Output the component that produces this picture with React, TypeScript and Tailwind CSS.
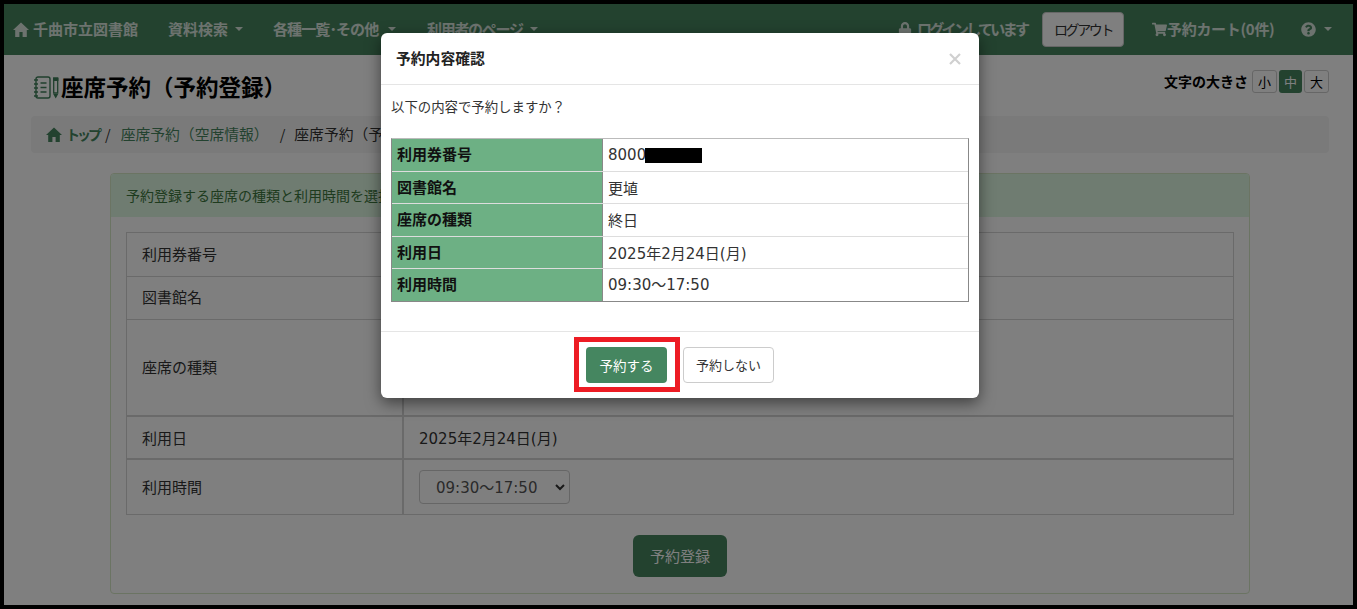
import { FaLock, FaShoppingCart, FaQuestionCircle } from "react-icons/fa";

const font = { fontFamily: '"Noto Sans CJK JP", "Open Sans", sans-serif' };
const valueFont = { fontFamily: '"DejaVu Sans", "Noto Sans CJK JP", sans-serif' };

function Caret({ className = "" }: { className?: string }) {
  return <span className={`inline-block w-0 h-0 border-x-4 border-x-transparent border-t-4 border-t-white/80 ${className}`} />;
}

function HomeIcon({ className = "" }: { className?: string }) {
  return (
    <svg className={className} width="16" height="15" viewBox="0 0 16 15" fill="currentColor">
      <path d="M8 0.5 L0 8 H2.2 V15 H6.4 V10 H9.6 V15 H13.8 V8 H16 Z" />
    </svg>
  );
}

function NotebookIcon() {
  return (
    <svg width="28" height="23" viewBox="0 0 28 23" fill="none" stroke="#3f7f5a" strokeWidth="1.4">
      <rect x="3" y="1" width="14" height="21" rx="2" />
      <path d="M1 4h4M1 8h4M1 12h4M1 16h4M1 20h4" strokeWidth="1.3" />
      <path d="M7.5 7h6M7.5 11.5h6M7.5 16h6" />
      <path d="M20.7 2h4v15h-4z" strokeWidth="1.3" />
      <path d="M20 2h5.4v3H20zM20.2 18h5l-2.5 4.5z" fill="#3f7f5a" stroke="none" />
    </svg>
  );
}

const bgRows = [
  { label: "利用券番号", h: "h-[44px]", lp: "pb-[1px]", vp: "", value: null as React.ReactNode, thick: false },
  { label: "図書館名", h: "h-[43px]", lp: "pb-[1px]", vp: "", value: null, thick: false },
  { label: "座席の種類", h: "h-[97px]", lp: "pb-[1px]", vp: "", value: null, thick: true },
  { label: "利用日", h: "h-[43px]", lp: "pt-[1px]", vp: "pt-[3px]", value: "2025年2月24日(月)", thick: true },
];

const modalRows = [
  { label: "利用券番号", h: "h-[33px]", vp: "", value: (
    <span className="flex items-center">8000<span className="inline-block w-[57px] h-[15px] bg-black -ml-[1px]" /></span>
  ) },
  { label: "図書館名", h: "h-[32px]", vp: "pt-[3px]", value: "更埴" },
  { label: "座席の種類", h: "h-[33px]", vp: "pt-[2px]", value: "終日" },
  { label: "利用日", h: "h-[32px]", vp: "pt-[3px]", value: "2025年2月24日(月)" },
  { label: "利用時間", h: "h-[32px]", vp: "", value: "09:30～17:50" },
];

export default function App() {
  return (
    <div style={font} className="relative w-[1357px] h-[609px] overflow-hidden border-4 border-black bg-white text-[14px] text-[#333]">
      {/* navbar */}
      <nav className="h-[51px] bg-[#46855f] flex items-center text-white/80 font-bold text-[15px] whitespace-nowrap pb-[1px]">
        <HomeIcon className="ml-[9px] shrink-0" />
        <span className="ml-[4px] w-[105px]">千曲市立図書館</span>
        <span className="ml-[30px] w-[60px]">資料検索</span>
        <Caret className="ml-[7px]" />
        <span className="ml-[30px] w-[108px] tracking-[-0.9px]">各種一覧･その他</span>
        <Caret className="ml-[7px]" />
        <span className="ml-[31px] w-[96px] tracking-[-1.3px]">利用者のページ</span>
        <Caret className="ml-[7px]" />
        <FaLock className="ml-auto text-[14px] shrink-0" />
        <span className="ml-[5px] w-[110px] tracking-[-2.7px]">ログインしています</span>
        <span className="ml-[15px] w-[82px] h-[35px] flex items-center justify-center rounded-[4px] border border-[#ccc] bg-white text-[#333] font-normal text-[14px] tracking-[-2.4px]">ログアウト</span>
        <FaShoppingCart className="ml-[28px] text-[15px] shrink-0" />
        <span className="w-[106px] tracking-[-0.3px]">予約カート(0件)</span>
        <FaQuestionCircle className="ml-[28px] text-[15px] shrink-0" />
        <Caret className="ml-[8px] mr-[21px]" />
      </nav>

      {/* title row */}
      <div className="h-[61px] flex items-start justify-between pl-[29px] pr-[24px]">
        <div className="flex items-center mt-[14px] h-[36px]">
          <NotebookIcon />
          <h1 className="text-[22.5px] font-bold text-black">座席予約（予約登録）</h1>
        </div>
        <div className="flex items-center mt-[15px] h-[23px]">
          <span className="font-bold text-black text-[14px] mr-[4px]">文字の大きさ</span>
          <span className="w-[25px] h-[23px] flex items-center justify-center rounded-[3px] border border-[#ccc] text-black text-[13px]">小</span>
          <span className="w-[23px] h-[23px] ml-[2px] flex items-center justify-center rounded-[3px] bg-[#46855f] text-white text-[13px]">中</span>
          <span className="w-[25px] h-[23px] ml-[2px] flex items-center justify-center rounded-[3px] border border-[#ccc] text-black text-[13px]">大</span>
        </div>
      </div>

      {/* breadcrumb */}
      <div className="ml-[27px] mr-[24px] h-[37px] rounded-[4px] bg-[#f5f5f5] flex items-center pl-[15px] whitespace-nowrap text-[14.4px] pb-[1px]">
        <HomeIcon className="text-[#46855f] shrink-0" />
        <span className="ml-[4px] text-[#46855f] font-bold text-[14px] tracking-[-3px]">トップ</span>
        <span className="ml-[6px]">/</span>
        <span className="ml-[10px] text-[#46855f] text-[14.8px]">座席予約（空席情報）</span>
        <span className="ml-[11px]">/</span>
        <span className="ml-[9px] text-[14.8px]">座席予約（予約登録）</span>
      </div>

      {/* panel */}
      <div className="ml-[106px] mr-[103px] mt-[20px] h-[421px] rounded-[4px] border border-[#d6e9c6] text-[15px]">
        <div className="h-[43px] bg-[#dff8e3] text-[#3c763d] flex items-center pl-[15px] rounded-t-[3px] text-[14px]">
          予約登録する座席の種類と利用時間を選択してください。
        </div>
        <div className="mx-[15px] mt-[15px] border border-b-0 border-[#d4d4d4]">
          {bgRows.map((r) => (
            <div key={r.label} className={`flex ${r.thick ? "border-b-2" : "border-b"} border-[#d4d4d4] ${r.h}`}>
              <div className={`w-[277px] border-r-2 border-[#d4d4d4] flex items-center pl-[15px] ${r.lp}`}>{r.label}</div>
              <div style={valueFont} className={`flex-1 flex items-center pl-[15px] text-[15px] ${r.vp}`}>{r.value}</div>
            </div>
          ))}
          <div className="flex border-b border-[#d4d4d4] h-[55px]">
            <div className="w-[277px] border-r-2 border-[#d4d4d4] flex items-center pl-[15px] pt-[1px]">利用時間</div>
            <div className="flex-1 flex items-center pl-[15px]">
              <div style={valueFont} className="w-[151px] h-[34px] rounded-[4px] border border-[#ccc] bg-white text-[#555] text-[15px] flex items-center pl-[16px] pt-[2px] relative">
                09:30～17:50
                <svg className="absolute right-[4px] top-[12px]" width="10" height="8" viewBox="0 0 10 8" fill="none" stroke="#333" strokeWidth="2">
                  <path d="M1 2l4 4 4-4" />
                </svg>
              </div>
            </div>
          </div>
        </div>
        <div className="flex justify-center mt-[20px]">
          <span className="w-[94px] h-[42px] rounded-[6px] bg-[#46855f] text-white flex items-center justify-center text-[15px]">予約登録</span>
        </div>
      </div>

      {/* backdrop */}
      <div className="absolute inset-0 bg-black/50" />

      {/* modal */}
      <div className="absolute left-[377px] top-[29px] w-[598px] h-[365px] bg-white rounded-[6px] shadow-[0_5px_15px_rgba(0,0,0,0.5)] flex flex-col">
        <div className="h-[52px] shrink-0 border-b border-[#e5e5e5] flex items-center justify-between pl-[15px] pr-[18px]">
          <span className="font-bold text-[#222] text-[14.8px] pb-[1px]">予約内容確認</span>
          <svg width="12" height="12" viewBox="0 0 12 12" stroke="#d0d0d0" strokeWidth="2.2">
            <path d="M1 1l10 10M11 1L1 11" />
          </svg>
        </div>
        <div className="h-[247px] shrink-0 border-b border-[#e5e5e5] px-[10px]">
          <p className="mt-[11px] h-[21px] leading-[21px] text-[13.4px]">以下の内容で予約しますか？</p>
          <div className="mt-[21px] w-[578px] border border-[#888] border-t-[#bbb] text-[15px]">
            {modalRows.map((r, i) => (
              <div key={r.label} className={`flex ${r.h} ${i < 4 ? "border-b border-[#ddd]" : ""}`}>
                <div className="w-[211px] bg-[#6db084] border-r border-[#888] flex items-center pl-[5px] pb-[1px] font-bold text-[#111]">{r.label}</div>
                <div style={valueFont} className={`flex-1 flex items-center pl-[5px] text-[15px] ${r.vp}`}>{r.value}</div>
              </div>
            ))}
          </div>
        </div>
        <div className="flex-1 flex items-start justify-center pt-[15px] relative">
          <span className="w-[81px] h-[36px] rounded-[4px] bg-[#458660] text-white flex items-center justify-center text-[13.5px]">予約する</span>
          <span className="ml-[16px] w-[91px] h-[36px] rounded-[4px] border border-[#ccc] flex items-center justify-center text-[13px]">予約しない</span>
          <span className="absolute left-[193px] top-[5px] w-[106px] h-[55px] border-[5px] border-[#ed1c24]" />
        </div>
      </div>
    </div>
  );
}
